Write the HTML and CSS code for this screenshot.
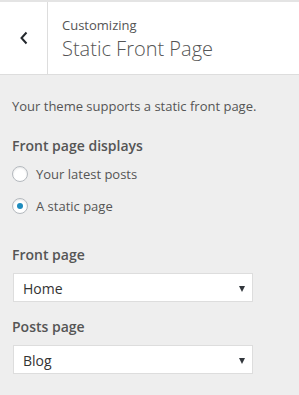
FILE: index.html
```html
<!DOCTYPE html>
<html lang="en">
<head>
    <meta charset="UTF-8">
    <meta name="viewport" content="width=device-width, initial-scale=1.0">
    <link rel="stylesheet" href="styles.css">
    <title>Static Front Page</title>
</head>
<body>
    <div class="panel-head">
        <button type="button" class="back" aria-label="Back">
            <svg width="10" height="14" viewBox="0 0 10 14"><path d="M7.5 1.5 L2.5 7 L7.5 12.5" fill="none" stroke="#23282d" stroke-width="2"/></svg>
        </button>
        <div class="head-title">
            <span class="crumb">Customizing</span>
            <h3>Static Front Page</h3>
        </div>
    </div>
    <div class="panel-body">
        <p class="desc">Your theme supports a static front page.</p>

        <div class="control">
            <span class="ctl-title">Front page displays</span>
            <label class="radio"><input type="radio" name="show_on_front"> Your latest posts</label>
            <label class="radio"><input type="radio" name="show_on_front" checked> A static page</label>
        </div>

        <div class="control">
            <span class="ctl-title">Front page</span>
            <div class="select"><span>Home</span><i class="caret"></i></div>
        </div>

        <div class="control">
            <span class="ctl-title">Posts page</span>
            <div class="select"><span>Blog</span><i class="caret"></i></div>
        </div>
    </div>
</body>
</html>
```

FILE: styles.css
```css
body {
    margin: 0;
    background: #eeeeee;
    font-family: "Open Sans", "Noto Sans", sans-serif;
    color: #555;
}
.panel-head {
    display: flex;
    height: 72px;
    background: #fff;
    border-top: 2px solid #e4e4e4;
    border-bottom: 1px solid #ddd;
}
.back {
    width: 48px;
    border: 0;
    border-right: 1px solid #ddd;
    background: #fff;
    padding: 0;
    display: flex;
    align-items: center;
    justify-content: center;
}
.head-title {
    padding: 13px 14px 0;
}
.crumb {
    display: block;
    font-size: 13px;
    line-height: 20px;
    color: #555;
}
.head-title h3 {
    margin: 1px 0 0;
    font-size: 20px;
    font-weight: 300;
    line-height: 26px;
    color: #555;
}
.panel-body {
    padding: 0 12px;
}
.desc {
    margin: 21px 0 0;
    font-size: 13px;
    line-height: 20px;
    color: #555;
}
.control {
    margin-top: 18px;
}
.control + .control {
    margin-top: 21px;
}
.control + .control + .control {
    margin-top: 13px;
}
.ctl-title {
    display: block;
    font-size: 14px;
    font-weight: 600;
    line-height: 24px;
    color: #555;
}
.radio {
    display: flex;
    align-items: center;
    gap: 8px;
    height: 32px;
    font-size: 13px;
    color: #555;
}
.radio input {
    appearance: none;
    margin: 0;
    width: 16px;
    height: 16px;
    border: 1px solid #b4b9be;
    border-radius: 50%;
    background: #fff;
    box-shadow: inset 0 1px 2px rgba(0,0,0,0.1);
    display: flex;
    align-items: center;
    justify-content: center;
}
.radio input:checked::before {
    content: "";
    width: 6px;
    height: 6px;
    border-radius: 50%;
    background: #1e8cbe;
}
.select {
    margin: 6px 0 0 1px;
    width: 240px;
    height: 29px;
    box-sizing: border-box;
    border: 1px solid #ddd;
    background: #fff;
    display: flex;
    align-items: center;
    justify-content: space-between;
    padding: 2px 7px 0 9px;
    font-size: 14px;
    color: #333;
}
.caret {
    width: 0;
    height: 0;
    border-left: 3px solid transparent;
    border-right: 3px solid transparent;
    border-top: 6px solid #32373c;
}
```
